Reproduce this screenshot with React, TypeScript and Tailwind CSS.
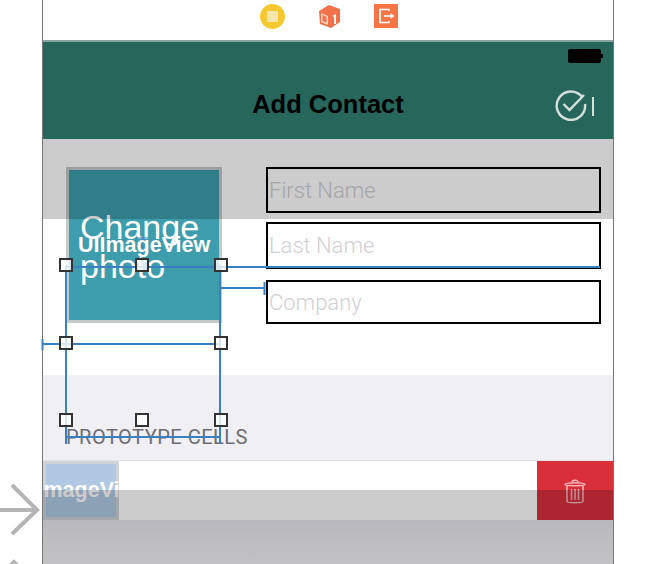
const sans = "font-['Liberation_Sans','Arial',sans-serif]"

const handles = [
  [66, 265],
  [142, 265],
  [221, 265],
  [66, 343],
  [221, 343],
  [66, 420],
  [142, 420],
  [221, 420],
]

// the storyboard selection: constraint lines and resize handles
const Constraints = () => {
  return (
    <svg className="absolute left-0 top-0 z-20" width="668" height="564" viewBox="0 0 668 564" fill="none">
      <g stroke="#3a7fc0" strokeWidth="2">
        <path d="M66 267H600" />
        <path d="M221 288H264M264.500 282V295" />
        <path d="M42 344H221M42.500 339V350" />
        <path d="M66 265V444M220 265V444" />
        <path d="M66 437H220" />
        <path d="M142 237V265M136 238H148" strokeWidth="1" />
      </g>
      {handles.map(([x, y]) => (
        <rect key={`${x}-${y}`} x={x - 6} y={y - 6} width="12" height="12" fill="#fff" fillOpacity="0.8" stroke="#333" strokeWidth="2" />
      ))}
      <path d="M0 510H36M12 485L37 510L12 534" stroke="#b4b4b4" strokeWidth="4" />
      <path d="M4 572L14 562L24 572" stroke="#b4b4b4" strokeWidth="4" />
    </svg>
  )
}

const ToolbarIcons = () => {
  return (
    <div className="flex h-10 items-start justify-center gap-[33px] pt-[4px] pl-[1px]">
      <svg width="25" height="25" viewBox="0 0 25 25">
        <circle cx="12.500" cy="12.500" r="12.500" fill="#f6c830" />
        <rect x="7" y="7" width="11" height="11" rx="1" fill="#f5e6ae" />
      </svg>
      <svg width="23" height="25" viewBox="0 0 23 25">
        <path d="M11 1L22 5V18L13 24L2 20L1 7Z" fill="#f0714a" strokeLinejoin="round" />
        <path d="M3 9L10 12V21L3 18ZM4.500 11V17L8.500 18.800V12.800Z" fill="#fbd5c8" />
        <path d="M15 11.500L18 10V20H16.200V12.700L15 13.300Z" fill="#fff" />
      </svg>
      <svg width="24" height="24" viewBox="0 0 24 24">
        <rect width="24" height="24" fill="#f97644" />
        <path d="M15 7V5.500H6V18.500H15V17" stroke="#fff" strokeWidth="1.600" fill="none" />
        <path d="M10 12H18" stroke="#fff" strokeWidth="1.600" />
        <path d="M16.500 9V15L20.500 12Z" fill="#fff" />
      </svg>
    </div>
  )
}

const NavBar = () => {
  return (
    <div className="relative flex h-[98px] items-center justify-center border-t border-[#8aa59f] bg-[#27675b]">
      <h1 className={`mt-[29px] text-[25.500px] leading-none font-bold text-black ${sans}`}>Add Contact</h1>
      <div className="absolute right-[10px] top-[7px] flex items-center">
        <div className="h-[14px] w-[33px] rounded-[2px] bg-black"></div>
        <div className="h-[4px] w-[2px] bg-black"></div>
      </div>
      <svg className="absolute right-[17px] top-[45px]" width="41" height="34" viewBox="0 0 41 34" fill="none" stroke="#d5dfdc" strokeWidth="2.400">
        <path d="M27.500 10.500A14.200 14.200 0 1 0 30 17" />
        <path d="M8.500 17L14.500 23L29 8" />
        <path d="M38 10V29" strokeWidth="2" />
      </svg>
    </div>
  )
}

const Field = ({ label, className }: { label: string; className: string }) => {
  return (
    <div className={`flex items-center border-2 border-black pl-[1px] text-[22px] font-light text-[#d0d0d4] font-['Roboto','Liberation_Sans',sans-serif] ${className}`}>
      {label}
    </div>
  )
}

const ContactForm = () => {
  return (
    <div className="relative flex h-[236px] gap-[44px] bg-white pl-[23px] pt-[28px]">
      <div className="h-[156px] w-[156px] shrink-0 border-[3px] border-[#c4c9ca] bg-[#3e9dad] pl-[11px] pt-[38px]">
        <p className={`text-[34px] leading-[39px] text-white ${sans}`}>Change photo</p>
      </div>
      <div className="w-[335px]">
        <Field label="First Name" className="h-[46px]" />
        <Field label="Last Name" className="mt-[9px] h-[47px]" />
        <Field label="Company" className="mt-[11px] h-[44px]" />
      </div>
      <div className="absolute left-0 right-0 top-0 h-[80px] bg-black/20"></div>
      <span className={`absolute left-[35px] top-[94px] z-30 text-[21.500px] leading-6 font-bold text-white ${sans}`}>UIImageView</span>
    </div>
  )
}

const PrototypeCell = () => {
  return (
    <div className="relative flex h-[60px] border-t border-[#e2e2e4] bg-white">
      <div className="flex w-[76px] items-center overflow-hidden bg-[#b0c8e4] shadow-[inset_0_0_0_3px_#cfd2d6]">
        <span className={`-ml-[27px] whitespace-nowrap text-[21.500px] font-bold text-white ${sans}`}>UIImageView</span>
      </div>
      <div className="flex-1"></div>
      <div className="flex w-[76px] items-center justify-center bg-[#d82f3b]">
        <svg width="22" height="26" viewBox="0 0 22 26" fill="none" stroke="#f3b6ba" strokeWidth="1.500">
          <path d="M1 6.500C1 4 21 4 21 6.500C21 8 1 8 1 6.500Z" />
          <path d="M8 4C8 1.500 14 1.500 14 4" />
          <path d="M3 8V23.500C3 25 19 25 19 23.500V8" />
          <path d="M7.500 11V22M11 11V22M14.500 11V22" />
        </svg>
      </div>
      <div className="absolute inset-x-0 bottom-0 h-[30px] bg-black/20"></div>
    </div>
  )
}

export default function App() {
  return (
    <div className="relative h-[564px] w-[668px] overflow-hidden bg-white">
      <div className="ml-[42px] flex h-[564px] w-[572px] flex-col border-x border-[#777]">
        <ToolbarIcons />
        <div className="h-px bg-[#8aa59f]"></div>
        <NavBar />
        <ContactForm />
        <div className="h-[85px] bg-[#efeff4] pl-[23px] pt-[50px]">
          <p className={`text-[20px] leading-6 uppercase tracking-[0.5px] text-[#6d6d72] font-['Roboto','Liberation_Sans',sans-serif]`}>Prototype Cells</p>
        </div>
        <PrototypeCell />
        <div className="flex-1 bg-linear-to-b from-[#b8b8bc] to-[#c2c2c4]"></div>
      </div>
      <Constraints />
    </div>
  )
}
